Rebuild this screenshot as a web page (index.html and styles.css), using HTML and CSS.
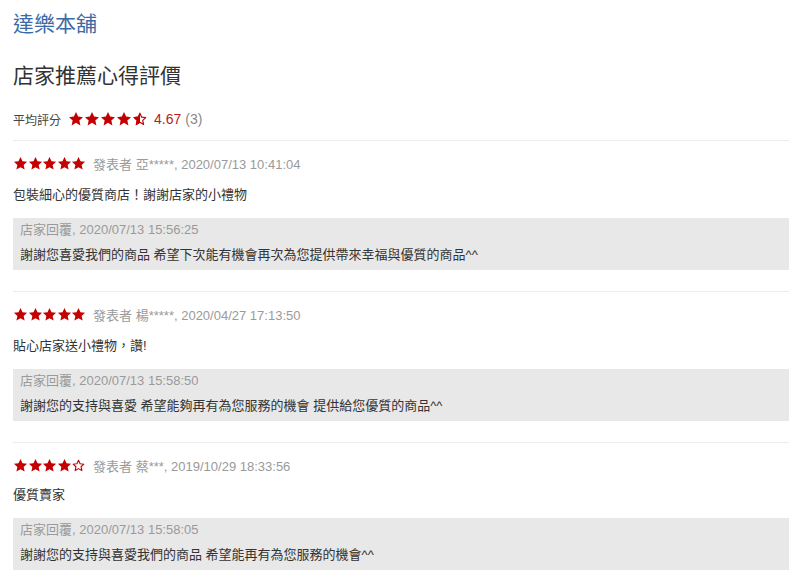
FILE: index.html
```html
<!DOCTYPE html>
<html lang="zh-Hant">
<head>
<meta charset="utf-8">
<title>達樂本舖</title>
<link rel="stylesheet" href="styles.css">
</head>
<body>
<svg class="defs" width="0" height="0" aria-hidden="true">
  <defs>
    <symbol id="star" viewBox="0 0 24 24">
      <path d="M12 1.5l3.2 6.9 7.3.8-5.5 5 1.6 7.4L12 17.8l-6.6 3.8 1.6-7.4-5.5-5 7.3-.8z" fill="currentColor"/>
    </symbol>
    <symbol id="star-o" viewBox="0 0 24 24">
      <path d="M12 3.6l2.6 5.6 6 .7-4.5 4.1 1.3 6.1L12 17l-5.4 3.1 1.3-6.1-4.5-4.1 6-.7z" fill="none" stroke="currentColor" stroke-width="1.8" stroke-linejoin="round"/>
    </symbol>
    <clipPath id="lefthalf"><rect x="0" y="0" width="12" height="24"/></clipPath>
    <symbol id="star-half" viewBox="0 0 24 24">
      <path d="M12 3.6l2.6 5.6 6 .7-4.5 4.1 1.3 6.1L12 17l-5.4 3.1 1.3-6.1-4.5-4.1 6-.7z" fill="none" stroke="currentColor" stroke-width="1.8" stroke-linejoin="round"/>
      <path d="M12 1.5l3.2 6.9 7.3.8-5.5 5 1.6 7.4L12 17.8l-6.6 3.8 1.6-7.4-5.5-5 7.3-.8z" fill="currentColor" clip-path="url(#lefthalf)"/>
    </symbol>
  </defs>
</svg>

<main class="page">
  <h1 class="shop">達樂本舖</h1>
  <h2 class="title">店家推薦心得評價</h2>
  <div class="summary">
    <span class="summary-label">平均評分</span>
    <span class="stars stars-lg">
      <svg><use href="#star"/></svg><svg><use href="#star"/></svg><svg><use href="#star"/></svg><svg><use href="#star"/></svg><svg><use href="#star-half"/></svg>
    </span>
    <span class="score">4.67</span>
    <span class="count">(3)</span>
  </div>

  <section class="review">
    <div class="review-head">
      <span class="stars">
        <svg><use href="#star"/></svg><svg><use href="#star"/></svg><svg><use href="#star"/></svg><svg><use href="#star"/></svg><svg><use href="#star"/></svg>
      </span>
      <span class="meta">發表者 亞*****, 2020/07/13 10:41:04</span>
    </div>
    <p class="comment">包裝細心的優質商店！謝謝店家的小禮物</p>
    <div class="reply">
      <div class="reply-head">店家回覆, 2020/07/13 15:56:25</div>
      <div class="reply-text">謝謝您喜愛我們的商品 希望下次能有機會再次為您提供帶來幸福與優質的商品^^</div>
    </div>
  </section>

  <section class="review">
    <div class="review-head">
      <span class="stars">
        <svg><use href="#star"/></svg><svg><use href="#star"/></svg><svg><use href="#star"/></svg><svg><use href="#star"/></svg><svg><use href="#star"/></svg>
      </span>
      <span class="meta">發表者 楊*****, 2020/04/27 17:13:50</span>
    </div>
    <p class="comment">貼心店家送小禮物，讚!</p>
    <div class="reply">
      <div class="reply-head">店家回覆, 2020/07/13 15:58:50</div>
      <div class="reply-text">謝謝您的支持與喜愛 希望能夠再有為您服務的機會 提供給您優質的商品^^</div>
    </div>
  </section>

  <section class="review">
    <div class="review-head">
      <span class="stars">
        <svg><use href="#star"/></svg><svg><use href="#star"/></svg><svg><use href="#star"/></svg><svg><use href="#star"/></svg><svg><use href="#star-o"/></svg>
      </span>
      <span class="meta">發表者 蔡***, 2019/10/29 18:33:56</span>
    </div>
    <p class="comment comment-short">優質賣家</p>
    <div class="reply">
      <div class="reply-head">店家回覆, 2020/07/13 15:58:05</div>
      <div class="reply-text">謝謝您的支持與喜愛我們的商品 希望能再有為您服務的機會^^</div>
    </div>
  </section>
</main>
</body>
</html>
```

FILE: styles.css
```css
html, body {
  margin: 0;
  padding: 0;
  background: #ffffff;
}

body {
  font-family: "Liberation Sans", "Noto Sans CJK TC", Arial, sans-serif;
  color: #333333;
}

.defs {
  position: absolute;
  width: 0;
  height: 0;
  overflow: hidden;
}

.page {
  padding: 9px 11px 0 13px;
}

.shop {
  margin: 0;
  font-size: 21px;
  font-weight: normal;
  line-height: 30px;
  color: #3c6aa6;
}

.title {
  margin: 22px 0 0;
  font-size: 21px;
  font-weight: normal;
  line-height: 30px;
  color: #333333;
}

.summary {
  display: flex;
  align-items: center;
  margin-top: 18px;
  margin-bottom: 11px;
  height: 20px;
}

.summary-label {
  font-size: 12px;
  color: #444444;
  margin-right: 7px;
}

.stars {
  display: inline-flex;
  align-items: center;
  color: #c40000;
}

.stars svg {
  width: 15px;
  height: 15px;
  margin-right: -0.4px;
}

.stars-lg svg {
  width: 16px;
  height: 16px;
  margin-right: 0;
}

.score {
  font-size: 14px;
  color: #b51c1c;
  margin-left: 6px;
}

.count {
  font-size: 14px;
  color: #888888;
  margin-left: 4px;
}

.review {
  border-top: 1px solid #ececec;
  padding: 12px 0 21px;
}

.review-head {
  display: flex;
  align-items: center;
  height: 20px;
}

.meta {
  margin-left: 7px;
  font-size: 13px;
  color: #9a9a9a;
}

.comment {
  margin: 12px 0 0;
  font-size: 13px;
  line-height: 20px;
  color: #333333;
}

.comment-short {
  margin-top: 10px;
}

.reply {
  margin-top: 13px;
  background: #e8e8e8;
  padding: 2px 7px 5px;
}

.reply-head {
  font-size: 13px;
  line-height: 20px;
  color: #9a9a9a;
}

.reply-text {
  margin-top: 5px;
  font-size: 13px;
  line-height: 20px;
  color: #333333;
}
```
